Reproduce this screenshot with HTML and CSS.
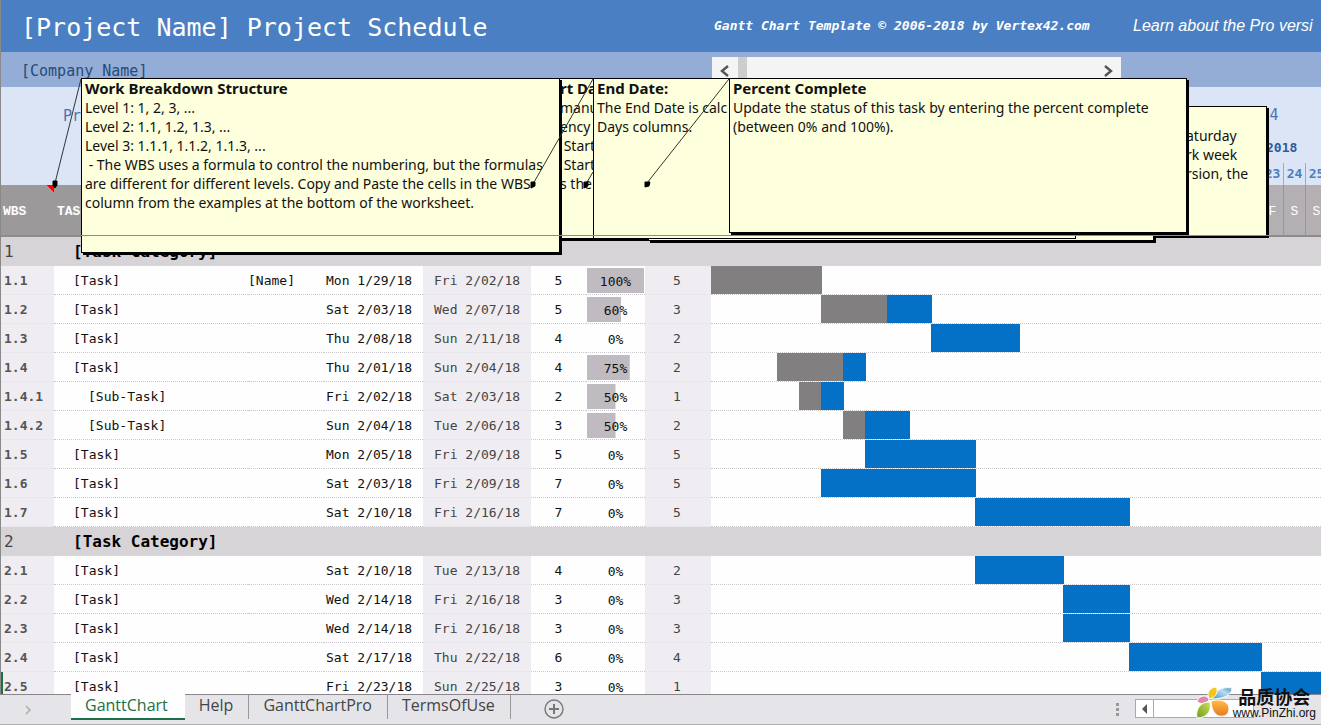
FILE: index.html
```html
<!DOCTYPE html>
<html lang="en">
<head>
<meta charset="utf-8">
<title>Gantt Chart</title>
<link rel="stylesheet" href="styles.css">
</head>
<body>
<main class="sheet">
  <header class="title-bar">
    <h1 class="title">[Project Name] Project Schedule</h1>
    <a class="credit" href="#">Gantt Chart Template © 2006-2018 by Vertex42.com</a>
    <a class="learn" href="#">Learn about the Pro versi</a>
  </header>
  <div class="company-bar">
    <span class="company">[Company Name]</span>
    <div class="week-scroll">
      <button class="scroll-btn" type="button" aria-label="Previous week"><svg width="10" height="12" viewBox="0 0 10 12"><path d="M8 1 2 6l6 5" fill="none" stroke="#555" stroke-width="2.4"/></svg></button>
      <span class="week-thumb"></span>
      <button class="scroll-btn next" type="button" aria-label="Next week"><svg width="10" height="12" viewBox="0 0 10 12"><path d="M2 1l6 5-6 5" fill="none" stroke="#555" stroke-width="2.4"/></svg></button>
    </div>
  </div>
  <div class="info">
    <span class="start-label">Pr</span>
    <div class="calendar">
      <span class="week">4</span>
      <span class="week-date">2018</span>
      <span class="day d23">23</span><span class="day d24">24</span><span class="day d25">25</span>
    </div>
  </div>
  <table class="plan">
    <colgroup><col class="c-wbs"><col class="c-task"><col class="c-lead"><col class="c-start"><col class="c-end"><col class="c-days"><col class="c-pct"><col class="c-work"><col></colgroup>
    <thead>
      <tr><th class="flag">WBS</th><th class="th-task">TAS</th><th></th><th></th><th></th><th></th><th></th><th></th>
      <th class="th-days"><div class="track letters"><span class="letter d23">F</span><span class="letter">S</span><span class="letter">S</span></div></th></tr>
    </thead>
    <tbody>
      <tr class="cat"><td>1</td><td colspan="8">[Task Category]</td></tr>
      <tr><td>1.1</td><td>[Task]</td><td>[Name]</td><td>Mon 1/29/18</td><td>Fri 2/02/18</td><td>5</td><td class="pct"><div class="meter" style="--p:100%">100%</div></td><td>5</td><td><div class="track"><i class="done" style="grid-column:1/6"></i></div></td></tr>
      <tr><td>1.2</td><td>[Task]</td><td></td><td>Sat 2/03/18</td><td>Wed 2/07/18</td><td>5</td><td class="pct"><div class="meter" style="--p:60%">60%</div></td><td>3</td><td><div class="track"><i class="done" style="grid-column:6/9"></i><i class="todo" style="grid-column:9/11"></i></div></td></tr>
      <tr><td>1.3</td><td>[Task]</td><td></td><td>Thu 2/08/18</td><td>Sun 2/11/18</td><td>4</td><td class="pct"><div class="meter" style="--p:0%">0%</div></td><td>2</td><td><div class="track"><i class="todo" style="grid-column:11/15"></i></div></td></tr>
      <tr><td>1.4</td><td>[Task]</td><td></td><td>Thu 2/01/18</td><td>Sun 2/04/18</td><td>4</td><td class="pct"><div class="meter" style="--p:75%">75%</div></td><td>2</td><td><div class="track"><i class="done" style="grid-column:4/7"></i><i class="todo" style="grid-column:7/8"></i></div></td></tr>
      <tr><td>1.4.1</td><td class="sub">[Sub-Task]</td><td></td><td>Fri 2/02/18</td><td>Sat 2/03/18</td><td>2</td><td class="pct"><div class="meter" style="--p:50%">50%</div></td><td>1</td><td><div class="track"><i class="done" style="grid-column:5/6"></i><i class="todo" style="grid-column:6/7"></i></div></td></tr>
      <tr><td>1.4.2</td><td class="sub">[Sub-Task]</td><td></td><td>Sun 2/04/18</td><td>Tue 2/06/18</td><td>3</td><td class="pct"><div class="meter" style="--p:50%">50%</div></td><td>2</td><td><div class="track"><i class="done" style="grid-column:7/8"></i><i class="todo" style="grid-column:8/10"></i></div></td></tr>
      <tr><td>1.5</td><td>[Task]</td><td></td><td>Mon 2/05/18</td><td>Fri 2/09/18</td><td>5</td><td class="pct"><div class="meter" style="--p:0%">0%</div></td><td>5</td><td><div class="track"><i class="todo" style="grid-column:8/13"></i></div></td></tr>
      <tr><td>1.6</td><td>[Task]</td><td></td><td>Sat 2/03/18</td><td>Fri 2/09/18</td><td>7</td><td class="pct"><div class="meter" style="--p:0%">0%</div></td><td>5</td><td><div class="track"><i class="todo" style="grid-column:6/13"></i></div></td></tr>
      <tr><td>1.7</td><td>[Task]</td><td></td><td>Sat 2/10/18</td><td>Fri 2/16/18</td><td>7</td><td class="pct"><div class="meter" style="--p:0%">0%</div></td><td>5</td><td><div class="track"><i class="todo" style="grid-column:13/20"></i></div></td></tr>
      <tr class="cat"><td>2</td><td colspan="8">[Task Category]</td></tr>
      <tr><td>2.1</td><td>[Task]</td><td></td><td>Sat 2/10/18</td><td>Tue 2/13/18</td><td>4</td><td class="pct"><div class="meter" style="--p:0%">0%</div></td><td>2</td><td><div class="track"><i class="todo" style="grid-column:13/17"></i></div></td></tr>
      <tr><td>2.2</td><td>[Task]</td><td></td><td>Wed 2/14/18</td><td>Fri 2/16/18</td><td>3</td><td class="pct"><div class="meter" style="--p:0%">0%</div></td><td>3</td><td><div class="track"><i class="todo" style="grid-column:17/20"></i></div></td></tr>
      <tr><td>2.3</td><td>[Task]</td><td></td><td>Wed 2/14/18</td><td>Fri 2/16/18</td><td>3</td><td class="pct"><div class="meter" style="--p:0%">0%</div></td><td>3</td><td><div class="track"><i class="todo" style="grid-column:17/20"></i></div></td></tr>
      <tr><td>2.4</td><td>[Task]</td><td></td><td>Sat 2/17/18</td><td>Thu 2/22/18</td><td>6</td><td class="pct"><div class="meter" style="--p:0%">0%</div></td><td>4</td><td><div class="track"><i class="todo" style="grid-column:20/26"></i></div></td></tr>
      <tr class="current"><td>2.5</td><td>[Task]</td><td></td><td>Fri 2/23/18</td><td>Sun 2/25/18</td><td>3</td><td class="pct"><div class="meter" style="--p:0%">0%</div></td><td>1</td><td><div class="track"><i class="todo" style="grid-column:26/29"></i></div></td></tr>
    </tbody>
  </table>

  <aside class="note note-start"><b>rt Da</b><br>manua<br>ency<br>&nbsp;Start<br>&nbsp;Start<br>s the</aside>
  <aside class="note note-work"><br>aturday<br>rk week<br>rsion, the</aside>
  <aside class="note note-blank"></aside>
  <aside class="note note-end"><b>End Date:</b><br>The End Date is calc<br>Days columns.</aside>
  <aside class="note note-wbs"><b>Work Breakdown Structure</b><br>Level 1: 1, 2, 3, ...<br>Level 2: 1.1, 1.2, 1.3, ...<br>Level 3: 1.1.1, 1.1.2, 1.1.3, ...<br>&nbsp;- The WBS uses a formula to control the numbering, but the formulas<br>are different for different levels. Copy and Paste the cells in the WBS<br>column from the examples at the bottom of the worksheet.</aside>
  <div class="freeze-line"></div>
  <svg class="arrows" width="740" height="200" viewBox="0 0 740 200">
    <g stroke="#333" stroke-width="1"><path d="M81 79 55 183M593 79l-60 105M593 172l-7 12M729 79l-82 104"/></g>
    <path d="M53 181h4v4l-2 3-2-3zM531 182l4 0 0 4-4 2zM584 182l4 0 0 4-4 2zM645 182l5 0-1 4-4 1z" stroke="#000"/>
  </svg>
  <aside class="note note-pct"><b>Percent Complete</b><br>Update the status of this task by entering the percent complete<br>(between 0% and 100%).</aside>
</main>

<footer class="tabs">
  <button class="nav" type="button" aria-label="Scroll tabs"><svg width="6" height="10" viewBox="0 0 6 10"><path d="M1 1l4 4-4 4" fill="none" stroke="#aaa" stroke-width="1.5"/></svg></button>
  <nav class="tab-list">
    <a class="tab active" href="#">GanttChart</a>
    <a class="tab first" href="#">Help</a>
    <a class="tab" href="#">GanttChartPro</a>
    <a class="tab" href="#">TermsOfUse</a>
  </nav>
  <button class="add" type="button" aria-label="New sheet"><svg width="20" height="20" viewBox="0 0 20 20" fill="none" stroke="#777"><circle cx="10" cy="10" r="9" stroke-width="1.4"/><path d="M10 5v10M5 10h10" stroke-width="2"/></svg></button>
  <svg class="grip" width="3" height="14" viewBox="0 0 3 14" fill="#999"><path d="M0 0h3v3H0zM0 5h3v3H0zM0 10h3v3H0z"/></svg>
  <div class="hscroll">
    <button class="hs-btn" type="button" aria-label="Scroll left"><svg width="6" height="10" viewBox="0 0 6 10"><path d="M5 0v10L0 5z" fill="#555"/></svg></button>
    <span class="hs-thumb"></span>
  </div>
</footer>
<div class="brand">
  <svg width="38" height="34" viewBox="0 0 38 34">
    <defs>
      <linearGradient id="g1" x1="0" y1="1" x2="1" y2="0"><stop offset="0" stop-color="#3f97c4"/><stop offset=".6" stop-color="#b5dcf0"/><stop offset="1" stop-color="#4a94bd"/></linearGradient>
      <linearGradient id="g2" x1="0" y1="0" x2="0" y2="1"><stop offset="0" stop-color="#ffc04a"/><stop offset="1" stop-color="#e8761c"/></linearGradient>
      <linearGradient id="g3" x1="0" y1="1" x2="1" y2="0"><stop offset="0" stop-color="#6f9c1c"/><stop offset="1" stop-color="#cfe25a"/></linearGradient>
    </defs>
    <path d="M16 13C17 6 25 0 36 2c0 7-8 11-20 11z" fill="url(#g1)" stroke="#fff"/>
    <path d="M14 13C10 9 12 2 20 1c3 4 0 10-6 12z" fill="#f6c414" stroke="#fff"/>
    <path d="M13 14c-1-5-9-6-12 1 3 4 9 3 12-1z" fill="#e088aa" stroke="#fff"/>
    <path d="M14 16C6 15-1 22 1 32c10 0 15-7 13-16z" fill="url(#g3)" stroke="#fff"/>
    <path d="M15 15c8-3 19 0 18 9-1 8-12 8-15 2-2-3-3-7-3-11z" fill="url(#g2)" stroke="#fff"/>
  </svg>
  <div class="brand-text"><span class="brand-cn" lang="zh">品质协会</span><span class="brand-url">www.PinZhi.org</span></div>
</div>
</body>
</html>
```
FILE: styles.css
```css
* { box-sizing: border-box; }
html, body { height: 100%; }
body {
  margin: 0;
  display: flex;
  flex-direction: column;
  overflow: hidden;
  position: relative;
  background: #fdfefd;
  color: #111;
  font: 13px/20px "DejaVu Sans Mono", monospace;
}
a { color: inherit; text-decoration: none; }
button { margin: 0; padding: 0; border: 0; background: none; font: inherit; display: flex; align-items: center; justify-content: center; }

.sheet { position: relative; flex: 1; min-height: 0; overflow: hidden; border-left: 1px solid #8a8a8a; }

.title-bar { display: flex; align-items: center; height: 52px; background: #4a7fc3; color: #fff; white-space: nowrap; }
.title { width: 710px; flex: none; margin: 0; padding: 4px 0 0 20px; font-size: 25px; line-height: 40px; font-weight: 400; }
.credit { width: 422px; flex: none; padding-left: 3px; font-weight: 700; font-style: italic; }
.learn { font: italic 16px/20px "Liberation Sans", sans-serif; }

.company-bar { display: flex; height: 35px; background: #94add6; }
.company { width: 711px; flex: none; padding: 9px 0 0 20px; font-size: 15px; color: #264b78; }
.week-scroll { display: flex; align-items: center; width: 409px; height: 28px; margin-top: 5px; background: #f4f4f4; }
.scroll-btn { width: 26px; height: 28px; }
.week-thumb { width: 9px; height: 28px; background: #cdcdcd; }
.next { margin-left: auto; }

.info { display: flex; height: 98px; background: #dbe5f6; }
.start-label { width: 710px; flex: none; padding: 19px 0 0 62px; font-size: 15px; color: #4b74b5; }
.calendar {
  flex: 1;
  display: grid;
  grid-template-columns: repeat(28, 22px);
  grid-template-rows: 44px 32px 22px;
  overflow: hidden;
  text-align: center;
  font-weight: 700;
  color: #4a7fc3;
}
.week { grid-column: 26; padding-top: 18px; padding-left: 4px; font-size: 15px; font-weight: 400; color: #4b74b5; }
.week-date { grid-column: 26 / 28; grid-row: 2; padding: 7px 0 0 5px; text-align: left; color: #2f5a9b; }
.day { grid-row: 3; line-height: 22px; border-left: 1px solid #a5a9b3; }
.d23 { grid-column: 26; }
.d24 { grid-column: 27; }
.d25 { grid-column: 28; }

.plan { width: 100%; table-layout: fixed; border-collapse: separate; border-spacing: 0; }
.c-wbs { width: 53px; }
.c-task { width: 194px; }
.c-lead { width: 76px; }
.c-start { width: 99px; }
.c-end { width: 108px; }
.c-days { width: 55px; }
.c-pct { width: 59px; }
.c-work { width: 66px; }
th, td { padding: 0; text-align: left; white-space: nowrap; overflow: hidden; }
th { height: 52px; background: #9b999a; border-bottom: 1px solid #8c8c8c; color: #fff; font: 700 13px/20px "Liberation Mono", monospace; padding: 3px 0 0 2px; }
.flag { background: linear-gradient(225deg, #f00 5px, transparent 5px) no-repeat #9b999a; }
.th-task { padding-left: 3px; }
.th-days { padding: 0; background: #b4afb2; }
.letters { text-align: center; }
.letters .letter { border-left: 1px solid #98969a; line-height: 53px; font-weight: 400; }

td { height: 29px; padding-top: 2px; border-bottom: 1px dotted #ccc8d0; line-height: 20px; }
td:first-child { padding-left: 3px; background: #efedf1; border-bottom-color: #e4e2e6; font-weight: 700; color: #555; }
td:nth-child(2) { padding-left: 19px; }
td.sub { padding-left: 34px; }
td:nth-child(4) { padding-left: 2px; }
td:nth-child(5) { padding-left: 11px; background: #efedf1; border-bottom-color: #e4e2e6; color: #444; }
td:nth-child(6) { text-align: center; }
td:nth-child(8) { text-align: center; background: #efedf1; border-bottom-color: #e4e2e6; color: #444; padding-right: 2px; }
td:nth-child(9) { padding-top: 0; }
td.pct { padding: 0 0 0 1px; }
.meter { width: 57px; height: 25px; line-height: 27px; text-align: center; background: linear-gradient(#bfbbc1, #bfbbc1) no-repeat left / var(--p) 100%; }
.cat td { background: #d6d4d6; border-bottom-color: #dcdadc; font-size: 16px; font-weight: 700; color: #000; }
.cat td:first-child { background: #d6d4d6; font-weight: 400; color: #444; }
.current td:first-child { box-shadow: inset 2px 0 #1a7044; }

.track { display: grid; grid-template-columns: repeat(28, 22px); height: 28px; }
.letters.track { height: 51px; }
.done, .todo { margin-right: -1px; }
.done { background: #817f80; }
.todo { background: #0470c6; }
.done + .todo { z-index: 1; }

.note {
  position: absolute;
  top: 78px;
  padding: 0 3px;
  overflow: hidden;
  border: 1px solid #000;
  background: #feffdc;
  box-shadow: 2px 2px 0 #000;
  color: #111;
  white-space: nowrap;
  font: 14px/19px "Noto Sans", sans-serif;
}
.note b { font-size: 15px; line-height: 18px; }
.note-wbs { left: 80px; width: 479px; height: 175px; }
.note-start { left: 555px; width: 400px; height: 161px; }
.note-blank { left: 647px; width: 506px; height: 163px; }
.note-end { left: 592px; width: 483px; height: 161px; box-shadow: none; }
.note-work { top: 106px; left: 1100px; width: 166px; height: 130px; padding-left: 84px; }
.note-pct { left: 728px; width: 458px; height: 155px; }
.freeze-line { position: absolute; top: 235px; left: 0; right: 0; height: 1px; background: #8c8c8c; }
.arrows { position: absolute; top: 0; left: -1px; fill: #000; }

.tabs {
  display: flex;
  height: 31px;
  flex: none;
  border-top: 1px solid #8a868c;
  border-bottom: 1px solid #b0b0b0;
  background: #e5e4e8;
  font: 16px/24px "Open Sans", sans-serif;
  color: #444;
}
.nav { width: 71px; padding-right: 16px; }
.tab-list { display: flex; height: 26px; }
.tab { padding: 0 15px 0 14px; line-height: 20px; border-right: 1px solid #999; height: 24px; }
.tab.active { height: 26px; padding-right: 17px; margin-top: -1px; padding-top: 1px; background: #fdfefd; color: #1a7044; border-right: 0; border-bottom: 2px solid #1a7044; }
.add { width: 20px; height: 28px; margin-left: 33px; }
.grip { margin: 8px 16px 0 auto; }
.hscroll { display: flex; width: 186px; height: 19px; margin-top: 4px; }
.hs-btn { width: 19px; border: 1px solid #aaa; background: #fff; }
.hs-thumb { width: 100px; border: 1px solid #aaa; border-left: 0; background: #fff; }

.brand { position: absolute; right: 5px; bottom: 5px; display: flex; align-items: flex-end; color: #111; }
.brand-text { display: flex; flex-direction: column; align-items: center; margin-left: -1px; }
.brand-cn { font: 700 18px/20px "Noto Sans CJK SC", sans-serif; }
.brand-url { font: 12px/14px "Liberation Sans", sans-serif; }
```
